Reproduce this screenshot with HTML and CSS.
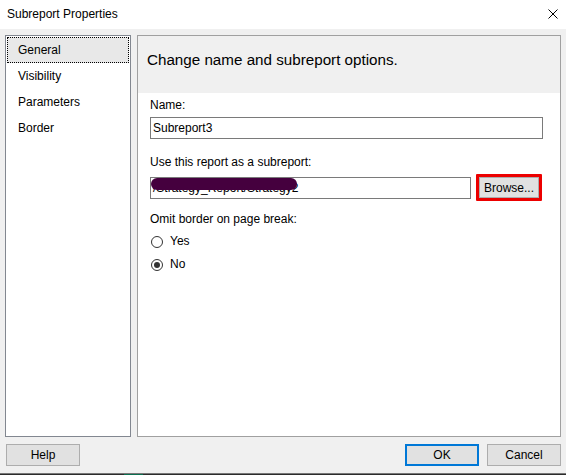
FILE: index.html
```html
<!DOCTYPE html>
<html lang="en">
  <head>
    <meta charset="UTF-8" />
    <meta name="viewport" content="width=device-width, initial-scale=1.0" />
    <title>Subreport Properties</title>
    <link rel="stylesheet" href="styles.css">
  </head>
  <body>
    <div class="titlebar">
      <span class="title">Subreport Properties</span>
      <svg class="close" width="10" height="10" viewBox="0 0 10 10">
        <path d="M0.5 0.5 L9.5 9.5 M9.5 0.5 L0.5 9.5" stroke="#000" stroke-width="1" fill="none" />
      </svg>
    </div>

    <div class="main">
      <ul class="nav">
        <li class="selected">General</li>
        <li>Visibility</li>
        <li>Parameters</li>
        <li>Border</li>
      </ul>

      <div class="panel">
        <div class="panel-head">Change name and subreport options.</div>
        <div class="panel-body">
          <div class="label first">Name:</div>
          <div class="textbox wide">Subreport3</div>

          <div class="label second">Use this report as a subreport:</div>
          <div class="row">
            <div class="textbox report">
              /Strategy_Report/Strategy2
              <span class="redact"></span>
            </div>
            <div class="highlight">
              <button class="btn browse">Browse...</button>
            </div>
          </div>

          <div class="label third">Omit border on page break:</div>
          <div class="radio-row first-radio">
            <span class="radio"></span>Yes
          </div>
          <div class="radio-row">
            <span class="radio checked"></span>No
          </div>
        </div>
      </div>
    </div>

    <div class="footer">
      <button class="btn">Help</button>
      <div class="spacer"></div>
      <button class="btn default">OK</button>
      <button class="btn">Cancel</button>
    </div>

    <div class="taskbar"><span class="app"></span></div>
  </body>
</html>
```

FILE: styles.css
```css
body {
  margin: 0;
  height: 475px;
  overflow: hidden;
  background-color: #f0f0f0;
  font-family: "Segoe UI", "Liberation Sans", Arial, sans-serif;
  font-size: 12px;
  color: #000;
}

.titlebar {
  height: 29px;
  background-color: #fff;
  display: flex;
  align-items: center;
  padding: 0 8px 0 7px;
  box-sizing: border-box;
}

.title {
  flex: 1;
  line-height: 27px;
}

.close {
  display: block;
  margin-bottom: 2px;
}

.main {
  display: flex;
  gap: 6px;
  padding: 6px 5px 0 5px;
  height: 402px;
}

.nav {
  list-style: none;
  margin: 0;
  padding: 1px 1px 0 1px;
  width: 126px;
  box-sizing: border-box;
  background-color: #fff;
  border: 1px solid #828790;
}

.nav li {
  height: 26px;
  line-height: 26px;
  padding-left: 11px;
  box-sizing: border-box;
}

.nav li.selected {
  background-color: #e8e8e8;
  border: 1px dotted #000;
  line-height: 24px;
  padding-left: 10px;
}

.panel {
  flex: 1;
  background-color: #fff;
  border: 1px solid #a0a0a0;
}

.panel-head {
  height: 57px;
  box-sizing: border-box;
  background-color: #f0f0f0;
  padding: 14px 0 0 9px;
  font-size: 15.2px;
  line-height: 20px;
}

.panel-body {
  padding: 4px 17px 0 12px;
}

.label {
  line-height: 16px;
}

.second {
  margin-top: 15px;
}

.third {
  margin-top: 10px;
}

.textbox {
  height: 22px;
  box-sizing: border-box;
  border: 1px solid #7a7a7a;
  padding-left: 2px;
  line-height: 20px;
  white-space: nowrap;
  overflow: hidden;
  background-color: #fff;
}

.wide {
  margin-top: 4px;
}

.row {
  display: flex;
  align-items: center;
  gap: 5px;
  margin-top: 4px;
}

.report {
  width: 321px;
  position: relative;
}

.redact {
  position: absolute;
  left: 0;
  top: 0;
  width: 146px;
  height: 12px;
  border-radius: 6px;
  background-color: #45003e;
}

.highlight {
  border: 3px solid #ec0000;
  border-radius: 1px;
  display: flex;
}

.btn {
  font-family: inherit;
  font-size: 12px;
  color: #000;
  width: 74px;
  height: 22px;
  padding: 0;
  background-color: #e1e1e1;
  border: 1px solid #adadad;
  box-sizing: border-box;
}

.browse {
  width: 60px;
  height: 21px;
}

.radio-row {
  display: flex;
  align-items: center;
  height: 23px;
  line-height: 23px;
}

.first-radio {
  margin-top: 3px;
}

.radio {
  width: 12px;
  height: 12px;
  box-sizing: border-box;
  border: 1px solid #333;
  border-radius: 50%;
  margin: 0 7px 0 1px;
  display: flex;
  align-items: center;
  justify-content: center;
}

.radio.checked::after {
  content: "";
  width: 6px;
  height: 6px;
  border-radius: 50%;
  background-color: #333;
}

.footer {
  display: flex;
  gap: 8px;
  padding: 7px 5px 0 6px;
  height: 36px;
  box-sizing: border-box;
}

.spacer {
  flex: 1;
}

.default {
  border: 2px solid #0078d7;
}

.taskbar {
  height: 2px;
  border-top: 1px solid #777;
  background-color: #2b2b2b;
  box-sizing: border-box;
}

.app {
  display: block;
  margin-left: 124px;
  width: 19px;
  height: 1px;
  background-color: #0b6e4f;
}
```
